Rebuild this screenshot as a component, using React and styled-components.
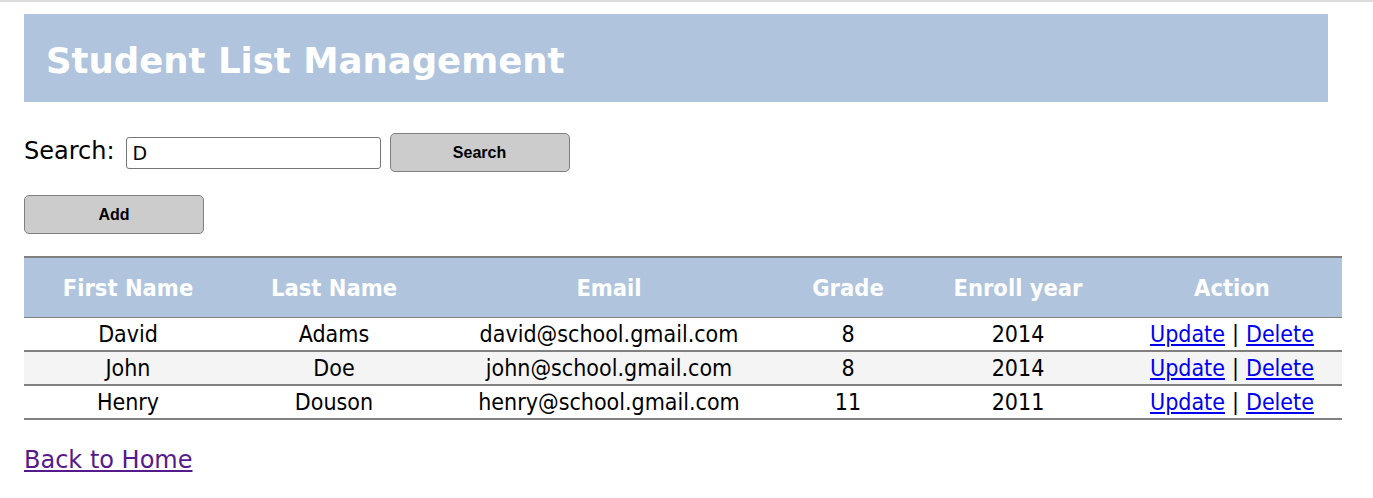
import React from "react";
import styled, { createGlobalStyle } from "styled-components";

const Global = createGlobalStyle`
  html, body { margin: 0; padding: 0; background: #fff; }
  body { font-family: "DejaVu Sans", Verdana, sans-serif; }
`;

const TopLine = styled.div`
  height: 2px;
  background: #dcdcdc;
`;

const Page = styled.div`
  padding: 12px 0 0 24px;
`;

const Header = styled.header`
  width: 1304px;
  height: 88px;
  box-sizing: border-box;
  background: #b0c4de;
  display: flex;
  align-items: center;
  padding: 4px 0 0 22px;
`;

const Title = styled.h1`
  margin: 0;
  color: #fff;
  font-family: "DejaVu Sans", Verdana, sans-serif;
  font-weight: bold;
  font-size: 35.5px;
`;

const SearchRow = styled.div`
  display: flex;
  align-items: center;
  margin-top: 31px;
  height: 39px;
`;

const Label = styled.label`
  font-size: 24px;
  color: #000;
  margin: -4px 11px 0 0;
`;

const Input = styled.input`
  width: 255px;
  height: 32px;
  box-sizing: border-box;
  border: 1px solid #767676;
  border-radius: 3px;
  font-family: "DejaVu Sans", Verdana, sans-serif;
  font-size: 19px;
  padding: 0 6px;
  margin: 0 9px 0 0;
`;

const Button = styled.button`
  width: 180px;
  height: 39px;
  background: #cccccc;
  border: 1px solid #808080;
  border-radius: 5px;
  font-family: "Liberation Sans", Arial, sans-serif;
  font-weight: bold;
  font-size: 16px;
  color: #000;
  cursor: pointer;
`;

const AddRow = styled.div`
  margin-top: 23px;
`;

const Table = styled.table`
  margin-top: 22px;
  width: 1318px;
  border-collapse: collapse;
  border-top: 2px solid #808080;
  border-bottom: 2px solid #808080;
  font-family: "DejaVu Sans Condensed", Tahoma, sans-serif;
`;

const Th = styled.th`
  background: #b0c4de;
  color: #fff;
  font-weight: bold;
  font-size: 23.5px;
  height: 59px;
  padding: 0;
  text-align: center;
`;

const Tr = styled.tr`
  background: ${(p) => (p.$alt ? "#f4f4f4" : "#fff")};
  & + & { border-top: ${(p) => (p.$thick ? "2px" : "1px")} solid #808080; }
`;

const Td = styled.td`
  font-size: 23px;
  height: 31px;
  padding: 1px 0 0;
  text-align: center;
  color: #000;
  line-height: 1;
`;

const HeadRow = styled.tr`
  border-bottom: 1px solid #808080;
`;

const ActionLink = styled.a`
  color: #0000ee;
  text-decoration: underline;
`;

const Sep = styled.span`
  margin: 0 7px;
`;

const BackLink = styled.a`
  display: inline-block;
  margin-top: 26px;
  font-size: 24px;
  color: #551a8b;
  text-decoration: underline;
`;

const cols = [
  ["First Name", 208],
  ["Last Name", 204],
  ["Email", 346],
  ["Grade", 132],
  ["Enroll year", 208],
  ["Action", 220],
];

const students = [
  ["David", "Adams", "david@school.gmail.com", "8", "2014"],
  ["John", "Doe", "john@school.gmail.com", "8", "2014"],
  ["Henry", "Douson", "henry@school.gmail.com", "11", "2011"],
];

export default function App() {
  return (
    <>
      <Global />
      <TopLine />
      <Page>
        <Header>
          <Title>Student List Management</Title>
        </Header>
        <SearchRow>
          <Label htmlFor="q">Search:</Label>
          <Input id="q" defaultValue="D" />
          <Button>Search</Button>
        </SearchRow>
        <AddRow>
          <Button>Add</Button>
        </AddRow>
        <Table>
          <colgroup>
            {cols.map(([n, w]) => (
              <col key={n} style={{ width: w }} />
            ))}
          </colgroup>
          <thead>
            <HeadRow>
              {cols.map(([n]) => (
                <Th key={n}>{n}</Th>
              ))}
            </HeadRow>
          </thead>
          <tbody>
            {students.map((s, i) => (
              <Tr key={s[0]} $alt={i === 1} $thick={i === 1}>
                {s.map((v, j) => (
                  <Td key={j}>{v}</Td>
                ))}
                <Td>
                  <ActionLink href="#">Update</ActionLink>
                  <Sep>|</Sep>
                  <ActionLink href="#">Delete</ActionLink>
                </Td>
              </Tr>
            ))}
          </tbody>
        </Table>
        <BackLink href="#">Back to Home</BackLink>
      </Page>
    </>
  );
}
